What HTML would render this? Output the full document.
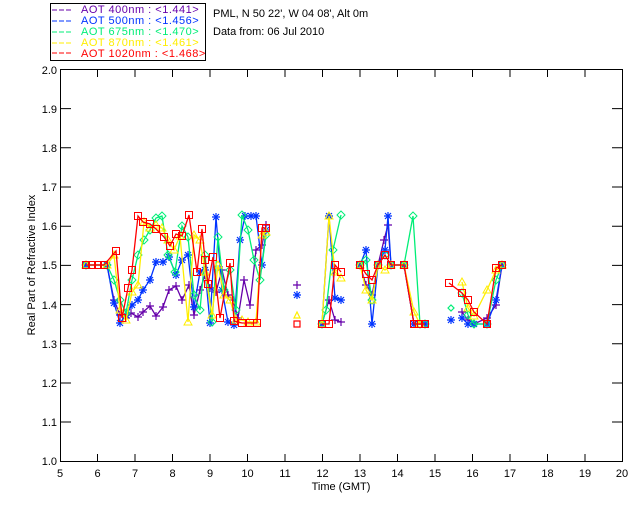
<!DOCTYPE html>
<html><head><meta charset="utf-8"><style>
html,body{margin:0;padding:0;background:#fff;}
svg{display:block;font-family:"Liberation Sans",sans-serif;}
text{font-size:11px;}
</style></head><body>
<svg width="640" height="512" viewBox="0 0 640 512" xmlns="http://www.w3.org/2000/svg">
<defs>
<marker id="mp" markerWidth="10" markerHeight="10" refX="5" refY="5" markerUnits="userSpaceOnUse"><path d="M1 5h8M5 1v8" stroke="#6600aa" stroke-width="1.2" fill="none"/></marker>
<marker id="mb" markerWidth="10" markerHeight="10" refX="5" refY="5" markerUnits="userSpaceOnUse"><path d="M1 5h8M5 1v8M2 2l6 6M8 2l-6 6" stroke="#0033ff" stroke-width="1.2" fill="none"/></marker>
<marker id="mg" markerWidth="10" markerHeight="10" refX="5" refY="5" markerUnits="userSpaceOnUse"><path d="M5 1l4 4-4 4-4-4z" stroke="#00ee77" stroke-width="1" fill="none"/></marker>
<marker id="my" markerWidth="10" markerHeight="10" refX="5" refY="5" markerUnits="userSpaceOnUse"><path d="M5 1l4 7h-8z" stroke="#ffee00" stroke-width="1" fill="none"/></marker>
<marker id="mr" markerWidth="10" markerHeight="10" refX="5" refY="5" markerUnits="userSpaceOnUse"><path d="M1.5 1.5h7v7h-7z" stroke="#ff0000" stroke-width="1" fill="none"/></marker>
</defs>
<rect width="640" height="512" fill="#fff"/>
<!-- legend -->
<rect x="50.5" y="3.5" width="155" height="57" fill="none" stroke="#000"/>
<g font-size="11" letter-spacing="0.5" xml:space="preserve">
<line x1="52" y1="10" x2="73" y2="10" stroke="#6600aa" stroke-dasharray="5,2"/>
<text x="81" y="13" fill="#6600aa">AOT  400nm : &lt;1.441&gt;</text>
<line x1="52" y1="21" x2="73" y2="21" stroke="#0033ff" stroke-dasharray="5,2"/>
<text x="81" y="24" fill="#0033ff">AOT  500nm : &lt;1.456&gt;</text>
<line x1="52" y1="32" x2="73" y2="32" stroke="#00ee77" stroke-dasharray="5,2"/>
<text x="81" y="35" fill="#00ee77">AOT  675nm : &lt;1.470&gt;</text>
<line x1="52" y1="43" x2="73" y2="43" stroke="#ffee00" stroke-dasharray="5,2"/>
<text x="81" y="46" fill="#ffee00">AOT  870nm : &lt;1.461&gt;</text>
<line x1="52" y1="53" x2="73" y2="53" stroke="#ff0000" stroke-dasharray="5,2"/>
<text x="81" y="57" fill="#ff0000">AOT 1020nm : &lt;1.468&gt;</text>
</g>
<text x="213" y="17">PML, N 50 22', W 04 08', Alt 0m</text>
<text x="213" y="35">Data from: 06 Jul 2010</text>
<!-- frame -->
<rect x="60.5" y="69.5" width="562" height="392" fill="none" stroke="#000"/>
<g stroke="#000">
<path d="M97.5 461v-7M135 461v-7M172.5 461v-7M210 461v-7M247.5 461v-7M285 461v-7M322.5 461v-7M360 461v-7M397.5 461v-7M435 461v-7M472.5 461v-7M510 461v-7M547.5 461v-7M585 461v-7"/>
<path d="M97.5 70v7M135 70v7M172.5 70v7M210 70v7M247.5 70v7M285 70v7M322.5 70v7M360 70v7M397.5 70v7M435 70v7M472.5 70v7M510 70v7M547.5 70v7M585 70v7"/>
<path d="M61 422h10M61 383h10M61 343.8h10M61 304.6h10M61 265.4h10M61 226.2h10M61 187h10M61 147.8h10M61 108.6h10"/>
<path d="M622 422h-10M622 383h-10M622 343.8h-10M622 304.6h-10M622 265.4h-10M622 226.2h-10M622 187h-10M622 147.8h-10M622 108.6h-10"/>
</g>
<g font-size="11" text-anchor="middle">
<text x="60" y="477">5</text><text x="97.5" y="477">6</text><text x="135" y="477">7</text><text x="172.5" y="477">8</text><text x="210" y="477">9</text><text x="247.5" y="477">10</text><text x="285" y="477">11</text><text x="322.5" y="477">12</text><text x="360" y="477">13</text><text x="397.5" y="477">14</text><text x="435" y="477">15</text><text x="472.5" y="477">16</text><text x="510" y="477">17</text><text x="547.5" y="477">18</text><text x="585" y="477">19</text><text x="622" y="477">20</text>
</g>
<g font-size="11" text-anchor="end">
<text x="57" y="465">1.0</text><text x="57" y="426">1.1</text><text x="57" y="387">1.2</text><text x="57" y="348">1.3</text><text x="57" y="309">1.4</text><text x="57" y="269">1.5</text><text x="57" y="230">1.6</text><text x="57" y="191">1.7</text><text x="57" y="152">1.8</text><text x="57" y="113">1.9</text><text x="57" y="74">2.0</text>
</g>
<text x="341" y="490" text-anchor="middle">Time (GMT)</text>
<text transform="translate(35,265) rotate(-90)" text-anchor="middle">Real Part of Refractive Index</text>
<!-- data lines -->
<g fill="none" stroke-width="1.3">
<g stroke="#6600aa" marker-start="url(#mp)" marker-mid="url(#mp)" marker-end="url(#mp)">
<polyline points="86,265 107,265 114,300 120,315 126,318 131,313 138,317 143,312 150,306 156,316 163,307 169,290 176,286 182,300 189,285 194,315 200,290 205,275 210,288 216,292 222,270 228,295 233,300 238,318 244,280 250,305 256,250 262,245 266,225"/>
<polyline points="322,324 329,300 335,320 341,322"/>
<polyline points="360,265 366,285 372,295 378,265 384,240 388,225 391,265 404,265 414,324 425,324"/>
<polyline points="462,312 468,320 474,324 487,318 496,305 502,265"/>
</g>
<g stroke="#0033ff" marker-start="url(#mb)" marker-mid="url(#mb)" marker-end="url(#mb)">
<polyline points="86,265 107,265 114,303 120,323 126,315 132,305 138,300 143,290 150,280 156,262 163,262 169,257 176,275 182,260 188,255 194,307 200,272 205,270 210,323 216,217 222,290 228,322 234,325 240,240 245,216 251,216 256,216 262,265 266,230"/>
<polyline points="322,324 329,216 335,298 341,300"/>
<polyline points="360,265 366,250 372,324 378,265 385,250 388,216 391,265 404,265 414,324 425,324"/>
<polyline points="462,318 468,324 474,324 487,324 496,300 502,265"/>
</g>
<g stroke="#00ee77" marker-start="url(#mg)" marker-mid="url(#mg)" marker-end="url(#mg)">
<polyline points="86,265 107,265 114,280 120,300 126,313 132,280 138,255 144,240 150,230 156,218 162,216 168,255 175,272 182,226 188,237 194,295 200,310 205,255 212,322 218,237 224,290 230,270 236,310 242,215 248,230 254,260 260,280 266,235"/>
<polyline points="322,324 326,310 333,250 341,215"/>
<polyline points="360,265 366,260 372,300 378,265 385,255 391,265 404,265 413,216 420,324 425,324"/>
<polyline points="462,293 468,315 474,324 487,324 496,280 502,265"/>
</g>
<g stroke="#ffee00" marker-start="url(#my)" marker-mid="url(#my)" marker-end="url(#my)">
<polyline points="86,265 107,265 114,255 120,310 126,320 132,292 138,285 144,222 150,228 156,225 162,228 168,240 174,250 180,236 188,322 194,235 200,240 205,272 212,315 218,265 224,295 230,300 236,320 242,320 248,322 256,322 262,235 266,232"/>
<polyline points="322,324 329,216 335,272 341,278"/>
<polyline points="360,265 366,290 372,300 378,265 385,270 391,265 404,265 414,312 420,324"/>
<polyline points="462,282 468,308 474,316 487,290 496,270 502,265"/>
</g>
<g stroke="#ff0000" marker-start="url(#mr)" marker-mid="url(#mr)" marker-end="url(#mr)">
<polyline points="86,265 92,265 98,265 104,265 116,251 122,318 128,288 132,270 138,216 143,222 150,224 156,229 164,237 170,246 176,234 182,236 189,215 197,272 202,229 205,260 208,284 213,257 220,318 230,263 234,321 242,323 250,323 257,323 262,228 266,228"/>
<polyline points="322,324 329,324 335,265 341,272"/>
<polyline points="360,265 366,274 372,280 378,265 385,255 391,265 404,265 414,324 419,324 425,324"/>
<polyline points="449,283 462,293 468,300 474,312 487,324 496,268 502,265"/>
</g>
</g>
<!-- isolated markers -->
<g stroke-width="1.2" fill="none">
<path d="M293 285h8M297 281v8" stroke="#6600aa"/>
<path d="M293 295h8M297 291v8M294 292l6 6M300 292l-6 6" stroke="#0033ff"/>
<path d="M294 318l3-6 3 6z" stroke="#ffee00"/>
<path d="M294 321h6v6h-6z" stroke="#ff0000"/>
<path d="M448 308l3-3 3 3-3 3z" stroke="#00ee77"/>
<path d="M447 320h8M451 316v8M448 317l6 6M454 317l-6 6" stroke="#0033ff"/>
</g>
</svg>
</body></html>
